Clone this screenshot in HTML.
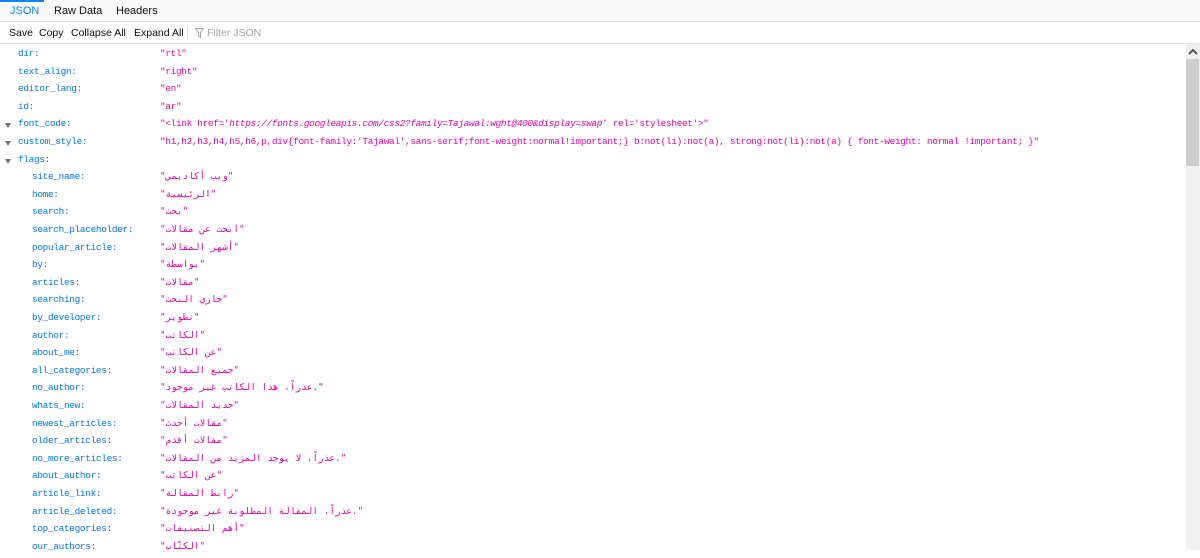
<!DOCTYPE html>
<html><head><meta charset="utf-8"><style>
*{margin:0;padding:0;box-sizing:border-box}
body{width:1200px;height:550px;overflow:hidden;background:#fff;font-family:"Liberation Sans",sans-serif;position:relative}
.tabs{position:absolute;left:0;top:0;width:1200px;height:22px;background:#f9f9fa;border-bottom:1px solid #e0e0e2;font-size:11px;color:#0c0c0d}
.tabs span{position:absolute;top:5px}
.tabs .act{color:#0a84ff}
.tabs .bar{position:absolute;left:0;top:0;width:44px;height:2px;background:#0a84ff}
.tool{position:absolute;left:0;top:22px;width:1200px;height:22px;background:#fff;border-bottom:1px solid #e0e0e2;font-size:10.5px;color:#0c0c0d}
.tool span{position:absolute;top:5px}
.tool .sep{position:absolute;left:187px;top:4px;width:1px;height:14px;background:#ddd}
.tool .f{color:#a0a0a5}
.row{position:absolute;height:17px;font-family:"Liberation Mono","DejaVu Sans Mono",monospace;font-size:9.4px;letter-spacing:-0.3px;white-space:pre}
.k{color:#0074e8;position:absolute;top:0}
.v{color:#dd00a9;position:absolute;left:160px;top:0}
.v i{font-style:italic}
.tw{position:absolute;left:5px;top:5px;width:0;height:0;border-left:3.5px solid transparent;border-right:3.5px solid transparent;border-top:5px solid #737373}
.sb{position:absolute;left:1186px;top:44px;width:14px;height:506px;background:#f0f0f0}
.th{position:absolute;left:1186px;top:59px;width:13px;height:107px;background:#cdcdcd}
.ar{font-family:"DejaVu Sans Mono","DejaVu Sans",monospace;letter-spacing:0}
</style></head><body>
<div class="tabs"><div class="bar"></div><span class="act" style="left:10px">JSON</span><span style="left:54px">Raw Data</span><span style="left:116px">Headers</span></div>
<div class="tool"><span style="left:9px">Save</span><span style="left:39px">Copy</span><span style="left:71px">Collapse All</span><span style="left:134px">Expand All</span><div class="sep"></div>
<svg style="position:absolute;left:195px;top:6px" width="9" height="10" viewBox="0 0 9 10"><path d="M0.5 0.5h8L5.5 4.5v5l-2-1.5v-3.5z" fill="none" stroke="#a0a0a5"/></svg><span class="f" style="left:207px">Filter JSON</span></div>
<div class="sb"></div><div class="th"></div>
<svg style="position:absolute;left:1188px;top:48px" width="10" height="8"><path d="M1 6l4-4 4 4" fill="none" stroke="#555" stroke-width="2"/></svg>
<div id="rows"></div>
<script>
var d=[
[0,0,'dir:','"rtl"'],[0,0,'text_align:','"right"'],[0,0,'editor_lang:','"en"'],[0,0,'id:','"ar"'],
[0,1,'font_code:',"\"&lt;link href='<i>https://fonts.googleapis.com/css2?family=Tajawal:wght@400&amp;display=swap</i>' rel='stylesheet'&gt;\""],
[0,1,'custom_style:',"\"h1,h2,h3,h4,h5,h6,p,div{font-family:'Tajawal',sans-serif;font-weight:normal!important;} b:not(li):not(a), strong:not(li):not(a) { font-weight: normal !important; }\""],
[0,1,'flags:',''],
[1,0,'site_name:','"ويب أكاديمي"'],[1,0,'home:','"الرئيسية"'],[1,0,'search:','"بحث"'],[1,0,'search_placeholder:','"ابحث عن مقالات"'],
[1,0,'popular_article:','"أشهر المقالات"'],[1,0,'by:','"بواسطة"'],[1,0,'articles:','"مقالات"'],[1,0,'searching:','"جاري البحث"'],
[1,0,'by_developer:','"تطوير"'],[1,0,'author:','"الكاتب"'],[1,0,'about_me:','"عن الكاتب"'],[1,0,'all_categories:','"جميع المقالات"'],
[1,0,'no_author:','"عذراً، هذا الكاتب غير موجود."'],[1,0,'whats_new:','"جديد المقالات"'],[1,0,'newest_articles:','"مقالات أحدث"'],
[1,0,'older_articles:','"مقالات أقدم"'],[1,0,'no_more_articles:','"عذراً، لا يوجد المزيد من المقالات."'],[1,0,'about_author:','"عن الكاتب"'],
[1,0,'article_link:','"رابط المقالة"'],[1,0,'article_deleted:','"عذراً، المقالة المطلوبة غير موجودة."'],[1,0,'top_categories:','"أهم التصنيفات"'],[1,0,'our_authors:','"الكتّاب"']];
var h='';
d.forEach(function(r,i){var y=48+i*17.6;
h+='<div class="row" style="left:0;top:'+y+'px;width:1180px">'+(r[1]?'<div class="tw"></div>':'')+'<span class="k" style="left:'+(r[0]?32:18)+'px">'+r[2]+'</span><span class="v'+(r[0]?' ar':'')+'">'+(r[0]?'<bdi dir="ltr">'+r[3]+'</bdi>':r[3])+'</span></div>';});
document.getElementById('rows').innerHTML=h;
</script>
</body></html>
